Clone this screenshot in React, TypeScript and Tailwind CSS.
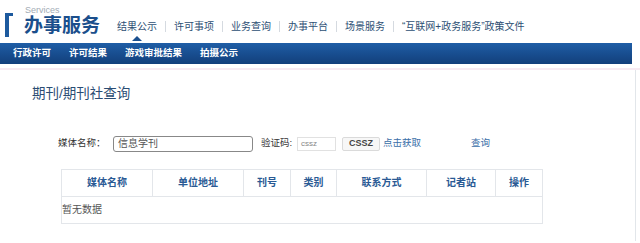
const topNav = ["结果公示", "许可事项", "业务查询", "办事平台", "场景服务", "“互联网+政务服务”政策文件"];
const subNav = ["行政许可", "许可结果", "游戏审批结果", "拍摄公示"];
const columns = [
  { name: "媒体名称", w: "w-[91px]" },
  { name: "单位地址", w: "w-[91px]" },
  { name: "刊号", w: "w-[47px]" },
  { name: "类别", w: "w-[46px]" },
  { name: "联系方式", w: "w-[90px]" },
  { name: "记者站", w: "w-[69px]" },
  { name: "操作", w: "flex-1" },
];

export default function App() {
  return (
    <div className="w-[640px] h-[243px] bg-white overflow-hidden font-['Liberation_Sans','Noto_Sans_CJK_SC',sans-serif]">
      {/* header */}
      <div className="h-[43px] flex items-start">
        <div className="relative w-[110px] h-[43px] shrink-0 whitespace-nowrap">
          <div className="absolute left-[5px] top-[13px] w-[4px] h-[24px] bg-[#1d5a9e]" />
          <div className="absolute left-[5px] top-[13px] w-[8px] h-[3px] bg-[#1d5a9e]" />
          <span className="absolute left-[25px] top-[6px] text-[9px] leading-none text-[#a3acb5]">Services</span>
          <span className="absolute left-[24px] top-[16px] text-[19px] leading-none font-bold text-[#1b4f8c]">办事服务</span>
        </div>
        <div className="flex items-center h-[14px] mt-[19px] ml-[7px] text-[10px] text-[#2d4f74] whitespace-nowrap">
          {topNav.map((t, i) => (
            <div key={t} className="flex items-center">
              {i > 0 && <span className="w-px h-[11px] bg-[#d5dae0] mx-[8px]" />}
              <span className="relative">
                {t}
                {i === 0 && (
                  <span className="absolute left-[15px] top-[17px] w-0 h-0 border-x-[5px] border-x-transparent border-b-[5px] border-b-[#1a4f8e]" />
                )}
              </span>
            </div>
          ))}
        </div>
      </div>
      <div className="h-[21px] w-[632px] bg-gradient-to-b from-[#1f5ea6] to-[#123f7b] flex items-center pl-[13px] gap-[18px] text-[9.5px] font-bold text-white whitespace-nowrap">
        {subNav.map((t) => (
          <span key={t}>{t}</span>
        ))}
      </div>
      <div className="h-[6px] border-b-2 border-[#f7eaf2]" />

      {/* body */}
      <div className="flex h-[171px]">
        <div className="w-[636px] border-r border-[#e2e6ea]">
          <div className="pl-[32px] pt-[17px] text-[13.5px] leading-none text-[#2a4c73]">期刊/期刊社查询</div>

          <div className="flex items-center mt-[35px] ml-[58px] h-[16px] text-[9.5px] text-[#333] whitespace-nowrap">
            <span className="w-[55px]">媒体名称：</span>
            <div className="w-[140px] h-[16px] border border-[#888] rounded-[3px] flex items-center pl-[4px] text-[10px] font-['Liberation_Serif','Noto_Sans_CJK_SC',serif] text-[#555]">
              信息学刊
            </div>
            <span className="ml-[8px] w-[36px]">验证码:</span>
            <div className="w-[39px] h-[14px] border border-[#e1e1e1] flex items-center pl-[3px] text-[8px] text-[#888]">cssz</div>
            <div className="ml-[6px] w-[38px] h-[14px] border border-[#dadada] bg-[#f7f7f7] rounded-[2px] flex items-center justify-center text-[9px] font-bold text-[#444]">CSSZ</div>
            <span className="ml-[3px] text-[#3a6ea8]">点击获取</span>
            <span className="ml-[50px] text-[#3a6ea8]">查询</span>
          </div>

          <div className="mt-[17px] ml-[61px] w-[482px] border border-[#e3e6ea]">
            <div className="flex h-[27px] border-b border-[#e3e6ea]">
              {columns.map((c, i) => (
                <div
                  key={c.name}
                  className={`${c.w} flex items-center justify-center text-[10px] font-bold text-[#2a5a94] ${i < columns.length - 1 ? "border-r border-[#e3e6ea]" : ""}`}
                >
                  {c.name}
                </div>
              ))}
            </div>
            <div className="h-[26px] flex items-center text-[10px] text-[#555]">暂无数据</div>
          </div>
        </div>
      </div>
    </div>
  );
}
